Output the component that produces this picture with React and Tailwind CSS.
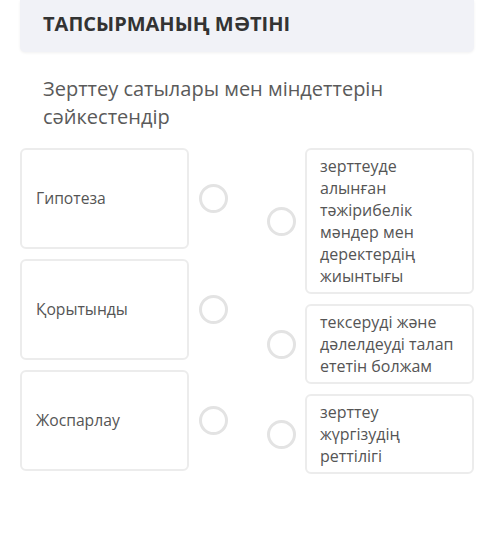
import React from 'react';

const leftItems = ['Гипотеза', 'Қорытынды', 'Жоспарлау'];

const rightItems = [
  'зерттеуде алынған тәжірибелік мәндер мен деректердің жиынтығы',
  'тексеруді және дәлелдеуді талап ететін болжам',
  'зерттеу жүргізудің реттілігі',
];

const Dot = () => (
  <div className="w-[29px] h-[29px] shrink-0 rounded-full border-[3px] border-[#e3e3e3] bg-white" />
);

export default function App() {
  return (
    <div
      className="w-[500px] h-[545px] bg-white overflow-hidden"
      style={{ fontFamily: '"Open Sans", "Noto Sans", sans-serif' }}
    >
      {/* Task header */}
      <div className="mx-[20px] mr-[26px] h-[52px] bg-[#f1f2f7] rounded-b-[5px] shadow-[0_1px_3px_rgba(0,0,0,0.06)] flex items-center px-[23px] pb-[4px]">
        <span className="text-[20px] font-bold text-[#333333]">
          ТАПСЫРМАНЫҢ МӘТІНІ
        </span>
      </div>

      <p className="mt-[23px] ml-[43px] w-[400px] text-[20px] leading-[28px] text-[#5a5a5a]">
        Зерттеу сатылары мен міндеттерін сәйкестендір
      </p>

      <div className="mt-[17px] flex">
        {/* left column */}
        <div className="ml-[20px] flex flex-col gap-[10px]">
          {leftItems.map((t) => (
            <div key={t} className="flex items-center gap-[10px]">
              <div className="w-[169px] h-[101px] rounded-[6px] border-2 border-[#ececec] flex items-center px-[14px]">
                <span className="text-[15.7px] text-[#555555]">{t}</span>
              </div>
              <Dot />
            </div>
          ))}
        </div>

        {/* right column */}
        <div className="ml-[39px] flex flex-col gap-[10px]">
          {rightItems.map((t) => (
            <div key={t} className="flex items-center gap-[9px]">
              <Dot />
              <div className="w-[169px] rounded-[6px] border-2 border-[#ececec] px-[13px] py-[5px]">
                <span className="block text-[16px] leading-[22px] text-[#555555]">{t}</span>
              </div>
            </div>
          ))}
        </div>
      </div>
    </div>
  );
}
